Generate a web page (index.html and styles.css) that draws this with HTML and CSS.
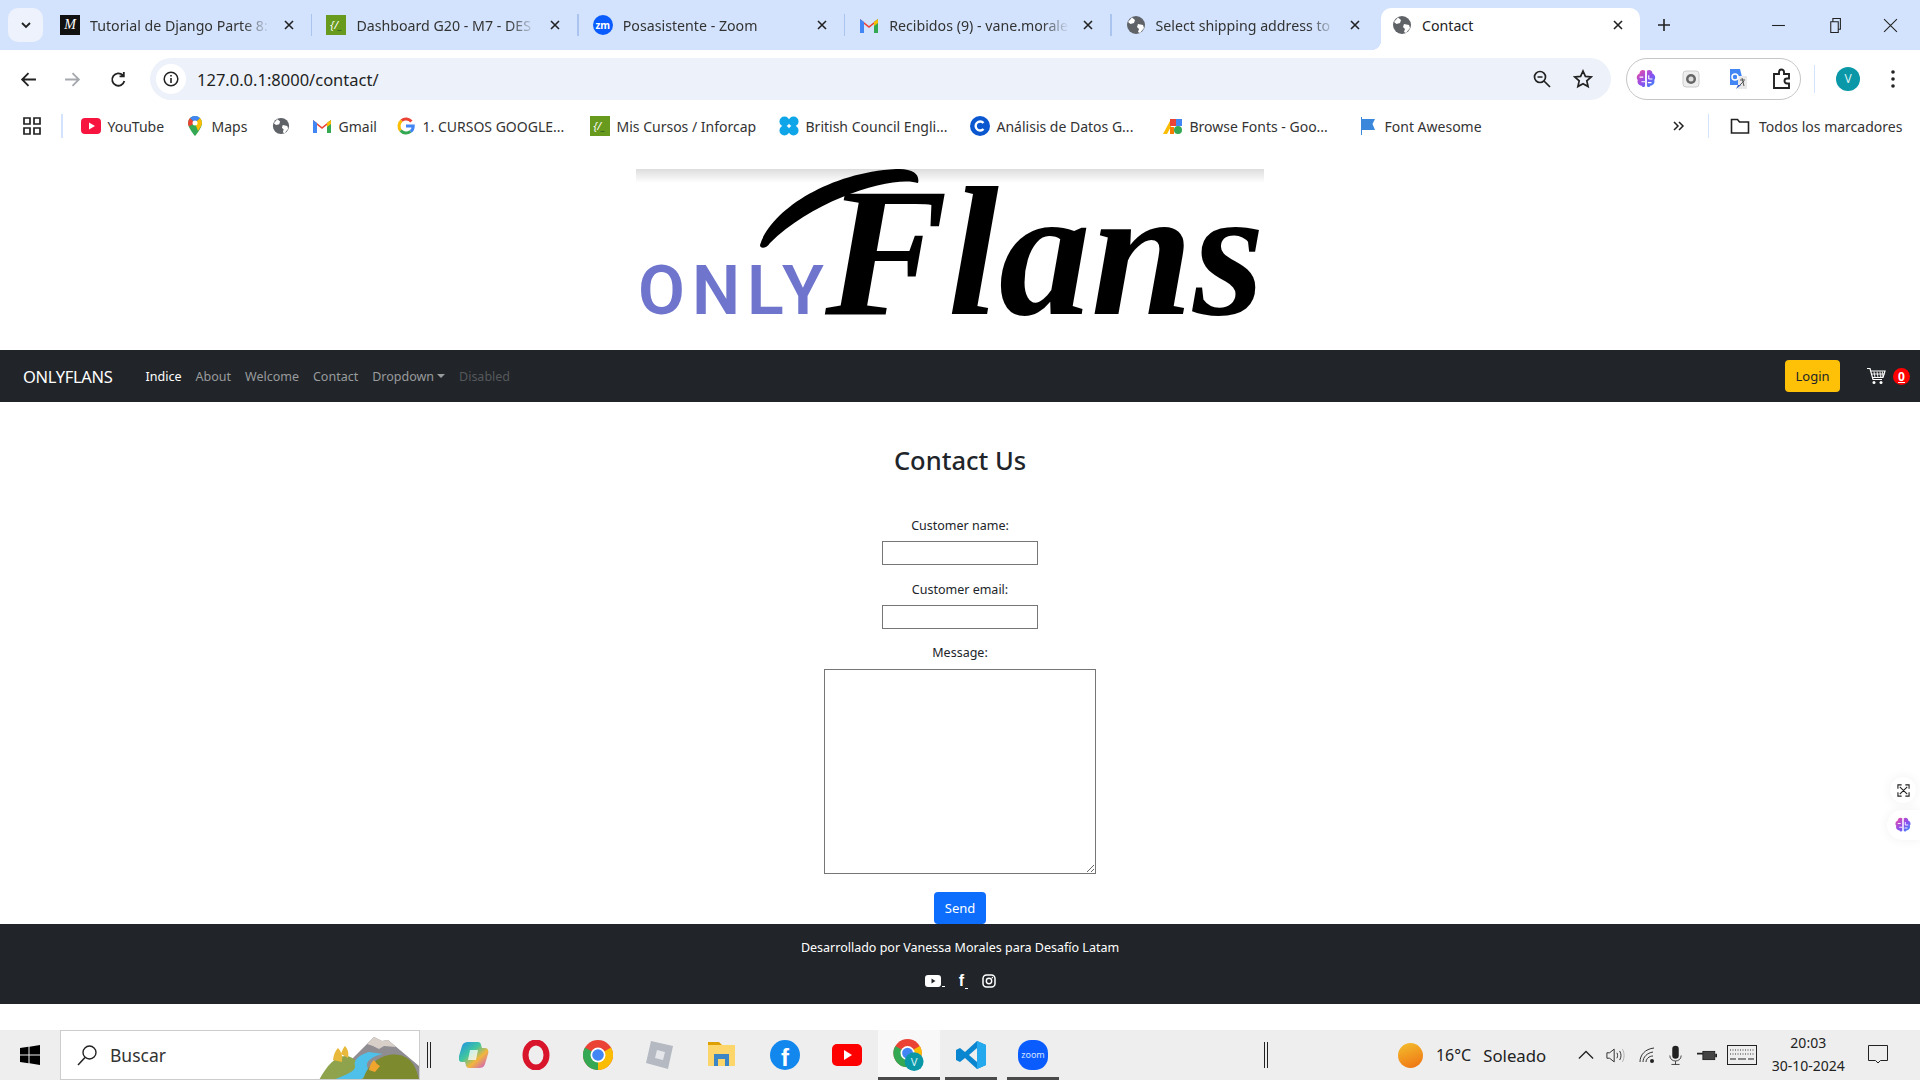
FILE: index.html
```html
<!DOCTYPE html>
<html>
<head>
    <meta charset="utf-8" />
    <title>Contact</title>
    <link rel="stylesheet" href="styles.css">
</head>
<body>
<svg class="defs" width="0" height="0">
    <symbol id="globe" viewBox="0 0 20 20">
        <circle cx="10" cy="10" r="9" fill="#5f6368"/>
        <path d="M6 2.500 9 5 8 8 4.500 9 2 7ZM12 9l5 1 1 3-4 5-2-1 1-3-2-2Z" fill="#fff"/>
    </symbol>
    <symbol id="x" viewBox="0 0 12 12">
        <path d="M2 2l8 8M10 2l-8 8" stroke="#222" stroke-width="1.600" fill="none"/>
    </symbol>
    <symbol id="brain" viewBox="0 0 24 24">
        <defs>
            <linearGradient id="brainfill" x1="0" x2="1" y1="0" y2="1">
                <stop offset="0" stop-color="#f24aa0"/>
                <stop offset=".55" stop-color="#8a4ff0"/>
                <stop offset="1" stop-color="#2f8cf5"/>
            </linearGradient>
        </defs>
        <path d="M11 3C8 1 5 3 5 6 2 7 1 11 3 13c-1 3 1 6 4 6 1 2 3 2 4 1ZM13 3c3-2 6 0 6 3 3 1 4 5 2 7 1 3-1 6-4 6-1 2-3 2-4 1Z" fill="url(#brainfill)"/>
        <path d="M5 10h4M7 15h4M15 8v4M15 12h4M14 16h4" stroke="#fff" stroke-width="1.200" fill="none"/>
    </symbol>
</svg>

<div class="screen">
    <div class="tabstrip">
        <div class="tab-list"><svg viewBox="0 0 12 12" width="12" height="12"><path d="M2 4l4 4 4-4" stroke="#222" stroke-width="1.800" fill="none"/></svg></div>
        <div class="tab">
            <span class="fav fav-black">M</span>
            <span class="tab-title">Tutorial de Django Parte 8:</span>
            <svg class="tab-x"><use href="#x"/></svg>
        </div>
        <div class="tab">
            <span class="fav fav-green">{/<b>_</b></span>
            <span class="tab-title">Dashboard G20 - M7 - DES</span>
            <svg class="tab-x"><use href="#x"/></svg>
        </div>
        <div class="tab">
            <span class="fav fav-zoom">zm</span>
            <span class="tab-title">Posasistente - Zoom</span>
            <svg class="tab-x"><use href="#x"/></svg>
        </div>
        <div class="tab">
            <svg class="fav" viewBox="0 0 20 20"><path d="M1 18V4l9 7 9-7v14h-4V9l-5 4-5-4v9Z" fill="#ea4335"/><path d="M1 18V4l4 3v11Z" fill="#4285f4"/><path d="M19 18V4l-4 3v11Z" fill="#34a853"/><path d="M15 7l4-3v4l-4 3Z" fill="#fbbc04"/></svg>
            <span class="tab-title">Recibidos (9) - vane.morale</span>
            <svg class="tab-x"><use href="#x"/></svg>
        </div>
        <div class="tab">
            <svg class="fav"><use href="#globe"/></svg>
            <span class="tab-title">Select shipping address to</span>
            <svg class="tab-x"><use href="#x"/></svg>
        </div>
        <div class="tab tab-active">
            <svg class="fav"><use href="#globe"/></svg>
            <span class="tab-title">Contact</span>
            <svg class="tab-x"><use href="#x"/></svg>
        </div>
        <svg class="tab-plus" viewBox="0 0 14 14"><path d="M7 1v12M1 7h12" stroke="#222" stroke-width="1.600"/></svg>
        <div class="window-btns">
            <svg viewBox="0 0 14 14"><path d="M1 7h12" stroke="#222"/></svg>
            <svg viewBox="0 0 14 14"><path d="M3.500 3.500h7v10h-7ZM5.500 3.500V.5h7v10h-2" stroke="#222" fill="none"/></svg>
            <svg viewBox="0 0 14 14"><path d="M1 1l12 12M13 1 1 13" stroke="#222"/></svg>
        </div>
    </div>

    <div class="toolbar">
        <svg class="tool-ico back" viewBox="0 0 16 16"><path d="M15 8H2M8 2 2 8l6 6" stroke="#222" stroke-width="1.700" fill="none"/></svg>
        <svg class="tool-ico forward" viewBox="0 0 16 16"><path d="M1 8h13M8 2l6 6-6 6" stroke="#a5a8ad" stroke-width="1.700" fill="none"/></svg>
        <svg class="tool-ico reload" viewBox="0 0 16 16"><path d="M13.500 9.500A5.800 5.800 0 1 1 12 4M13 1v4H9" stroke="#222" stroke-width="1.700" fill="none"/></svg>
        <div class="omnibox">
            <span class="info"><svg viewBox="0 0 16 16" width="16" height="16"><circle cx="8" cy="8" r="6.800" stroke="#222" stroke-width="1.500" fill="none"/><path d="M8 7v5M8 4v1.600" stroke="#222" stroke-width="1.600"/></svg></span>
            <span class="url">127.0.0.1:8000/contact/</span>
            <svg class="omni-ico" viewBox="0 0 18 18"><circle cx="7" cy="7" r="5.500" stroke="#222" stroke-width="1.700" fill="none"/><path d="M11 11l6 6M4.500 7h5" stroke="#222" stroke-width="1.700"/></svg>
            <svg class="omni-ico star" viewBox="0 0 20 20"><path d="M10 2l2.400 5.400 5.800.6-4.400 3.900 1.300 5.700L10 14.700l-5.100 2.900 1.300-5.700L1.800 8l5.800-.6Z" stroke="#222" stroke-width="1.700" fill="none"/></svg>
        </div>
        <div class="ext-pill">
            <svg class="ext"><use href="#brain"/></svg>
            <svg class="ext" viewBox="0 0 22 22"><rect x="3" y="3" width="16" height="16" rx="3" fill="#eee" stroke="#ccc"/><circle cx="11" cy="11" r="5" fill="#666"/><circle cx="11" cy="11" r="2.500" fill="#ddd"/></svg>
            <svg class="ext" viewBox="0 0 22 22"><path d="M4 1h10l4 16H4Z" fill="#4285f4"/><path d="M12 8h9v13H12Z" fill="#e8e8e8"/><path d="M14 12h5M16 10l2 8M18 13l-4 4" stroke="#555" fill="none"/><path d="M12 17l-2 4 5-4Z" fill="#2a56c6"/><circle cx="9" cy="9" r="3" stroke="#fff" stroke-width="1.500" fill="none"/></svg>
            <svg class="ext" viewBox="0 0 22 22"><path d="M3 6h5V4a2.500 2.500 0 0 1 5 0v2h5v4.500h-2a2.500 2.500 0 0 0 0 5h2V20H3Z" stroke="#222" stroke-width="1.900" fill="none"/></svg>
        </div>
        <span class="tool-sep"></span>
        <span class="avatar">V</span>
        <svg class="kebab" viewBox="0 0 4 18"><circle cx="2" cy="2" r="1.800" fill="#222"/><circle cx="2" cy="9" r="1.800" fill="#222"/><circle cx="2" cy="16" r="1.800" fill="#222"/></svg>
    </div>

    <div class="bookmarks">
        <svg class="apps" viewBox="0 0 18 18"><path d="M1 1h6v6H1ZM11 1h6v6h-6ZM1 11h6v6H1ZM11 11h6v6h-6Z" stroke="#222" stroke-width="1.700" fill="none"/></svg>
        <span class="bm-sep"></span>
        <a class="bm bm-yt"><svg viewBox="0 0 20 20"><rect y="2" width="20" height="16" rx="4" fill="#f7143f"/><path d="M8 6.500v7l6-3.500Z" fill="#fff"/></svg>YouTube</a>
        <a class="bm bm-maps"><svg viewBox="0 0 20 20"><path d="M10 0a7 7 0 0 0-7 7c0 5 7 13 7 13s7-8 7-13a7 7 0 0 0-7-7Z" fill="#34a853"/><path d="M10 0a7 7 0 0 0-5 2l5 5 5-5a7 7 0 0 0-5-2Z" fill="#4285f4"/><path d="M5 2a7 7 0 0 0-2 5c0 1 .5 2.500 1 3.500L10 7Z" fill="#ea4335"/><path d="M15 2l-5 5 3 8c2-3 4-6 4-8a7 7 0 0 0-2-5Z" fill="#fbbc04"/><circle cx="10" cy="7" r="2.500" fill="#fff"/></svg>Maps</a>
        <svg class="bm-globe"><use href="#globe"/></svg>
        <a class="bm bm-gmail"><svg viewBox="0 0 20 20"><path d="M1 17V4l9 7 9-7v13h-4V9l-5 4-5-4v8Z" fill="#ea4335"/><path d="M1 17V4l4 3v10Z" fill="#4285f4"/><path d="M19 17V4l-4 3v10Z" fill="#34a853"/><path d="M15 7l4-3v4l-4 3Z" fill="#fbbc04"/></svg>Gmail</a>
        <a class="bm bm-goog"><svg viewBox="0 0 20 20" fill="none" stroke-width="3.400"><path d="M16 5a8 8 0 0 0-11-1" stroke="#ea4335"/><path d="M5 4a8 8 0 0 0-1 11" stroke="#fbbc04"/><path d="M4 15a8 8 0 0 0 11 1" stroke="#34a853"/><path d="M15 16c2-1 3-3 3-6h-8" stroke="#4285f4"/></svg>1. CURSOS GOOGLE...</a>
        <a class="bm bm-cursos"><span class="fav fav-green">{/<b>_</b></span>Mis Cursos / Inforcap</a>
        <a class="bm bm-bc"><svg viewBox="0 0 22 22"><circle cx="6" cy="6" r="5.500" fill="#0ea5e9"/><circle cx="16" cy="6" r="5.500" fill="#0ea5e9"/><circle cx="6" cy="16" r="5.500" fill="#0ea5e9"/><circle cx="16" cy="16" r="5.500" fill="#0ea5e9"/></svg>British Council Engli...</a>
        <a class="bm bm-c"><svg viewBox="0 0 20 20"><circle cx="10" cy="10" r="10" fill="#0b57d0"/><path d="M13.500 7a4.500 4.500 0 1 0 0 6" stroke="#fff" stroke-width="2.400" fill="none"/></svg>Análisis de Datos G...</a>
        <a class="bm bm-fonts"><svg viewBox="0 0 20 20"><path d="M0 18 8 3h4L4 18Z" fill="#fbbc04"/><path d="M7 3h6v7H7Z" fill="#ea4335"/><path d="M13 3h6v7h-6Z" fill="#4285f4"/><circle cx="15" cy="14" r="4" fill="#34a853"/><path d="M7 11h4v7H7Z" fill="#f57c00"/></svg>Browse Fonts - Goo...</a>
        <a class="bm bm-fa"><svg viewBox="0 0 18 20"><path d="M2 1h1v18H2ZM3 3h13l-2.500 5 2.500 6H3Z" fill="#3b87dc"/></svg>Font Awesome</a>
        <svg class="bm-more" viewBox="0 0 12 12"><path d="M1 2l4 4-4 4M6 2l4 4-4 4" stroke="#222" stroke-width="1.500" fill="none"/></svg>
        <span class="bm-sep bm-sep-r"></span>
        <a class="bm bm-all"><svg viewBox="0 0 20 20"><path d="M1.500 3.500h6l2 2.500h9v11h-17Z" stroke="#222" stroke-width="1.600" fill="none"/></svg>Todos los marcadores</a>
    </div>

    <div class="page">
        <div class="logo">
            <span class="logo-only">ONLY</span>
            <span class="logo-flans">Flans</span>
            <svg class="logo-swash" viewBox="0 0 200 90"><path d="M4 78C14 45 70 6 140 2c18-1 24 6 22 14C140 8 60 30 14 76c-4 6-10 6-10 2Z" fill="#000"/></svg>
        </div>

        <nav class="navbar">
            <a class="brand">ONLYFLANS</a>
            <ul class="nav-links">
                <li class="active">Indice</li>
                <li>About</li>
                <li>Welcome</li>
                <li>Contact</li>
                <li class="dropdown">Dropdown</li>
                <li class="disabled">Disabled</li>
            </ul>
            <button class="btn btn-login">Login</button>
            <svg class="cart" viewBox="0 0 20 18"><path d="M1 1.500h3l3 11h9M5 4h14l-2 6.500H7" stroke="#fff" stroke-width="1.200" fill="none"/><path d="M8 4.500l1 6M11 4.500l1 6M14 4.500l.5 6M16.500 4.500l-.5 6M5.500 7h13" stroke="#fff" stroke-width=".9"/><circle cx="8" cy="15.500" r="1.500" fill="#fff"/><circle cx="15" cy="15.500" r="1.500" fill="#fff"/></svg>
            <span class="cart-badge">0</span>
        </nav>

        <main class="contact">
            <h1>Contact Us</h1>
            <form class="contact-form">
                <label>Customer name:</label>
                <input type="text" class="field field-name">
                <label>Customer email:</label>
                <input type="email" class="field">
                <label>Message:</label>
                <textarea class="field-msg"></textarea>
                <button type="button" class="btn btn-send">Send</button>
            </form>
        </main>

        <footer class="footer">
            <p>Desarrollado por Vanessa Morales para Desafío Latam</p>
            <div class="socials">
                <a><svg viewBox="0 0 16 12" width="16" height="12"><rect width="16" height="12" rx="3" fill="#fff"/><path d="M6.500 3.500v5l4-2.500Z" fill="#212529"/></svg><i></i></a>
                <a><span class="fb">f</span><i></i></a>
                <a><svg viewBox="0 0 14 14" width="14" height="14"><rect x="1" y="1" width="12" height="12" rx="3.500" stroke="#fff" stroke-width="1.500" fill="none"/><circle cx="7" cy="7" r="2.700" stroke="#fff" stroke-width="1.400" fill="none"/><circle cx="10.400" cy="3.600" r=".8" fill="#fff"/></svg></a>
            </div>
        </footer>
    </div>

    <div class="taskbar">
        <svg class="win" viewBox="0 0 20 20"><path d="M0 3l8.500-1.200V9.500H0ZM9.500 1.700 20 0v9.500H9.500ZM0 10.500h8.500v7.700L0 17ZM9.500 10.500H20V20L9.500 18.300Z" fill="#000"/></svg>
        <div class="search">
            <svg viewBox="0 0 22 22" width="22" height="22"><circle cx="13.500" cy="8.500" r="6.500" stroke="#222" stroke-width="1.400" fill="none"/><path d="M9 13.500 2 21" stroke="#222" stroke-width="1.500"/></svg>
            <span>Buscar</span>
            <svg class="scene" viewBox="0 0 100 50">
                <path d="M32 30 55 7l8 4 6-1 31 26v14H30Z" fill="#8f8c92"/>
                <path d="M48 14 55 7l8 4 6-1 8 7-12-1-5 3-6-3Z" fill="#d8cfc9"/>
                <path d="M0 50C8 36 16 25 28 26 40 28 42 42 48 50Z" fill="#8ea34b"/>
                <path d="M14 30c1-8 4-11 5-12 3 3 5 8 4 14ZM22 24c1-4 3-7 4-8 3 3 4 7 3 12Z" fill="#e8b93a"/>
                <path d="M50 22c-10 3-16 8-14 14 1 5-10 9-22 14h26c10-4 10-9 8-14-1-5 6-10 16-12Z" fill="#4fc0ea"/>
                <path d="M44 50c4-18 24-30 40-24 10 4 14 14 16 24Z" fill="#7d8a2d"/>
                <path d="M50 40c1-6 3-8 5-10l3 4 3 2-5 6Z" fill="#efa52e"/>
            </svg>
        </div>
        <span class="tb-sep"></span>
        <div class="tb-apps">
            <span class="tb-app"><svg viewBox="0 0 30 30"><defs><linearGradient id="cop" x1="0" x2="1" y1="0" y2="1"><stop offset="0" stop-color="#1f8fe8"/><stop offset=".4" stop-color="#3fc6a0"/><stop offset=".65" stop-color="#f2b63c"/><stop offset="1" stop-color="#c84fdc"/></linearGradient></defs><path d="M9 2h10c3 0 3 3 4 6h3c3 0 4 3 3 6l-3 10c-1 3-3 4-6 4H10c-3 0-3-3-4-6H3c-3 0-4-3-3-6L3 6c1-3 3-4 6-4Z" fill="url(#cop)"/><path d="M11 10h8l-2 10H9Z" fill="#fff" opacity=".75"/></svg></span>
            <span class="tb-app"><svg viewBox="0 0 30 30"><ellipse cx="15" cy="15" rx="10.500" ry="12.500" stroke="#d9152b" stroke-width="6" fill="none"/></svg></span>
            <span class="tb-app"><svg viewBox="0 0 30 30"><circle cx="15" cy="15" r="15" fill="#ea4335"/><path d="M15 15 28 7.500A15 15 0 0 1 15 30Z" fill="#fbbc04"/><path d="M15 15 15 30A15 15 0 0 1 2 7.500Z" fill="#34a853"/><circle cx="15" cy="15" r="7.500" fill="#fff"/><circle cx="15" cy="15" r="5.800" fill="#4285f4"/></svg></span>
            <span class="tb-app"><svg viewBox="0 0 30 30"><path d="M6 1 28 6l-5 23-22-6Z" fill="#b4b9c2"/><path d="M12 10l8 2-2 8-8-2Z" fill="#e4e6ea"/></svg></span>
            <span class="tb-app"><svg viewBox="0 0 30 30"><path d="M1 2h11l3 3H1Z" fill="#dea000"/><path d="M1 5h27v21H1Z" fill="#fcd66b"/><path d="M7 14h15v12h-4v-7h-7v7H7Z" fill="#3d86c6"/></svg></span>
            <span class="tb-app"><svg viewBox="0 0 30 30"><circle cx="15" cy="15" r="15" fill="#1287ee"/><text x="15" y="26" class="fb-glyph">f</text></svg></span>
            <span class="tb-app"><svg viewBox="0 0 30 30"><rect y="4" width="30" height="22" rx="5" fill="#f00"/><path d="M12 10v10l8-5Z" fill="#fff"/></svg></span>
            <span class="tb-app tb-open"><svg viewBox="0 0 32 34"><circle cx="15" cy="15" r="15" fill="#ea4335"/><path d="M15 15 28 7.500A15 15 0 0 1 15 30Z" fill="#fbbc04"/><path d="M15 15 15 30A15 15 0 0 1 2 7.500Z" fill="#34a853"/><circle cx="15" cy="15" r="7.500" fill="#fff"/><circle cx="15" cy="15" r="5.800" fill="#4285f4"/><circle cx="22" cy="24" r="10" fill="#0a97a8"/><text x="22" y="28.500" class="v-glyph">V</text></svg></span>
            <span class="tb-app tb-run"><svg viewBox="0 0 30 30"><path d="M21 1 30 5v20l-9 4-12-11-5 4-4-2V10l4-2 5 4Z" fill="#0a85cf"/><path d="M21 1l9 4v20l-9 4Z" fill="#25a9ee"/><path d="M21 8v14l-8-7Z" fill="#eee"/></svg></span>
            <span class="tb-app tb-run"><svg viewBox="0 0 30 30"><rect width="30" height="30" rx="13" fill="#0b5cff"/><text x="15" y="18" class="zoom-glyph">zoom</text></svg></span>
        </div>
        <span class="tb-sep tb-sep-r"></span>
        <span class="sun"></span>
        <span class="weather">16°C</span>
        <span class="weather weather-txt">Soleado</span>
        <svg class="tray tray-up" viewBox="0 0 18 10"><path d="M1 9l8-8 8 8" stroke="#222" stroke-width="1.400" fill="none"/></svg>
        <svg class="tray tray-vol" viewBox="0 0 22 18"><path d="M1 6h3l5-4v14l-5-4H1Z" stroke="#222" fill="none"/><path d="M12 6c1 2 1 4 0 6M15 4c2 3 2 7 0 10" stroke="#222" fill="none"/><path d="M18 2c2.500 4 2.500 10 0 14" stroke="#aaa" fill="none"/></svg>
        <svg class="tray tray-wifi" viewBox="0 0 18 18"><path d="M1 16C1 9 6 3 15 2M4 16c0-5 4-9 10-10M7 16c0-3 3-6 7-6" stroke="#333" fill="none"/><circle cx="13" cy="15" r="2" fill="#222"/></svg>
        <svg class="tray tray-mic" viewBox="0 0 16 24"><rect x="4" y="0" width="8" height="16" rx="4" fill="#222"/><path d="M1 12c0 9 14 9 14 0M8 19v4M3 23h10" stroke="#222" fill="none"/></svg>
        <svg class="tray tray-bat" viewBox="0 0 22 14"><path d="M2 0v5M5 0v5M0 4h7v2H0Z" fill="#222"/><rect x="6.500" y="2.500" width="13" height="9" fill="#444" stroke="#222"/><path d="M21 5v4" stroke="#222" stroke-width="2"/></svg>
        <svg class="tray tray-kb" viewBox="0 0 30 20"><rect x=".5" y=".5" width="29" height="19" fill="none" stroke="#222"/><path d="M3 5h24M3 9h24" stroke="#333" stroke-dasharray="1 1.500"/><path d="M3 14h6M11 14h8M21 14h6" stroke="#222"/></svg>
        <div class="clock"><span>20:03</span><span>30-10-2024</span></div>
        <svg class="tray tray-note" viewBox="0 0 20 20"><path d="M.5.500h19v15h-7L10 18l-2.500-2.500h-7Z" stroke="#222" fill="none"/></svg>
    </div>

    <div class="side-tools">
        <span class="side-btn"><svg viewBox="0 0 14 14" width="13" height="13"><path d="M1 5V1h4M9 1h4v4M13 9v4H9M5 13H1V9M3 3l8 8M11 3 3 11" stroke="#222" stroke-width="1.200" fill="none"/></svg></span>
        <span class="side-pill"><svg width="18" height="18"><use href="#brain"/></svg></span>
    </div>
</div>
</body>
</html>
```

FILE: styles.css
```css
* {
    box-sizing: border-box;
}

body {
    margin: 0;
    background-color: white;
    color: #212529;
    font-family: "Noto Sans", sans-serif;
}

.defs {
    position: absolute;
}

.screen {
    position: relative;
    width: 1920px;
    height: 1080px;
    display: flex;
    flex-direction: column;
    overflow: hidden;
}

/* browser tabs */
.tabstrip {
    height: 50px;
    flex: none;
    display: flex;
    align-items: flex-end;
    background-color: #d3e3fd;
}
.tab-list {
    width: 35px;
    height: 34px;
    margin: 0 6px 8px 8px;
    display: flex;
    align-items: center;
    justify-content: center;
    background-color: #edf2fc;
    border-radius: 10px;
}
.tab {
    position: relative;
    width: 266.4px;
    height: 42px;
    padding: 0 18px 8px 11px;
    display: flex;
    align-items: center;
    flex: none;
}
.tab::after {
    content: "";
    position: absolute;
    right: 3px;
    top: 6px;
    width: 1.5px;
    height: 22px;
    background-color: #a9c4ee;
}
.tab:nth-child(6)::after,
.tab-active::after {
    display: none;
}
.fav {
    width: 20px;
    height: 20px;
    flex: none;
}
.fav-black {
    background-color: #111;
    color: white;
    font: italic 14px/20px "Liberation Serif", serif;
    text-align: center;
}
.fav-green {
    background-color: #689a1e;
    color: white;
    font: italic 11px/20px "Noto Sans", sans-serif;
    text-align: center;
    overflow: hidden;
}
.fav-green b {
    color: #174a22;
}
.fav-zoom {
    background-color: #0b5cff;
    color: white;
    border-radius: 50%;
    font: bold 10px/20px "Noto Sans", sans-serif;
    text-align: center;
}
.tab-title {
    flex: none;
    width: 180px;
    margin-left: 10px;
    font-size: 14.2px;
    color: #333;
    white-space: nowrap;
    -webkit-mask-image: linear-gradient(to right, black 85%, transparent);
    mask-image: linear-gradient(to right, black 85%, transparent);
}
.tab-x {
    width: 12px;
    height: 12px;
    margin-left: 13px;
    flex: none;
}
.tab-active {
    width: 259px;
    margin-right: 17px;
    background-color: white;
    border-radius: 10px 10px 0 0;
}
.tab-active .tab-title {
    width: 187px;
    -webkit-mask-image: none;
    mask-image: none;
    color: #222;
}
.tab-active .tab-x {
    margin-left: 3px;
}
.tab-active::before {
    content: "";
    position: absolute;
    left: -10px;
    bottom: 0;
    width: 10px;
    height: 10px;
    background: radial-gradient(circle at 0 0, transparent 10px, white 10.5px);
}
.tab-plus {
    width: 14px;
    height: 14px;
    margin: 0 0 18px 0;
    flex: none;
}
.window-btns {
    margin-left: auto;
    display: flex;
    gap: 41px;
    padding: 0 22px 17px 0;
}
.window-btns svg {
    width: 15px;
    height: 15px;
}

/* address bar */
.toolbar {
    height: 57px;
    flex: none;
    display: flex;
    align-items: center;
    padding-top: 1px;
    background-color: white;
    border-radius: 10px 10px 0 0;
}
.tool-ico {
    width: 17px;
    height: 17px;
    flex: none;
}
.back {
    margin-left: 20px;
}
.forward {
    margin-left: 27px;
}
.reload {
    margin-left: 29px;
}
.omnibox {
    width: 1461px;
    height: 42px;
    margin-left: 23px;
    padding-left: 6px;
    display: flex;
    align-items: center;
    background-color: #edf2fa;
    border-radius: 21px;
}
.info {
    width: 30px;
    height: 30px;
    background-color: white;
    border-radius: 50%;
    display: flex;
    align-items: center;
    justify-content: center;
}
.url {
    margin-left: 11px;
    font-size: 16.5px;
    color: #1f1f1f;
    padding-top: 1px;
}
.omni-ico {
    width: 18px;
    height: 18px;
    margin-left: auto;
}
.omni-ico.star {
    width: 20px;
    height: 20px;
    margin: 0 18px 0 22px;
}
.ext-pill {
    width: 175px;
    height: 42px;
    margin-left: 15px;
    padding: 0 7px 0 8px;
    display: flex;
    align-items: center;
    justify-content: space-between;
    border: 1px solid #c4c7c5;
    border-radius: 21px;
}
.ext {
    width: 22px;
    height: 22px;
}
.tool-sep {
    width: 1px;
    height: 28px;
    margin-left: 13px;
    background-color: #d3e3fd;
}
.avatar {
    width: 24px;
    height: 24px;
    margin-left: 21px;
    background-color: #0a97a8;
    color: #d8f2f4;
    border-radius: 50%;
    font-size: 12px;
    line-height: 24px;
    text-align: center;
}
.kebab {
    width: 4px;
    height: 18px;
    margin-left: 31px;
}

/* bookmarks */
.bookmarks {
    height: 40px;
    flex: none;
    display: flex;
    align-items: center;
    background-color: white;
    font-size: 14px;
    color: #333;
    padding-bottom: 2px;
}
.apps {
    width: 18px;
    height: 18px;
    margin-left: 23px;
}
.bm-sep {
    width: 1.5px;
    height: 24px;
    margin-left: 20px;
    background-color: #d3e3fd;
}
.bm {
    display: flex;
    align-items: center;
    flex: none;
    white-space: nowrap;
}
.bm svg,
.bm .fav {
    width: 20px;
    height: 20px;
    margin-right: 7px;
    flex: none;
}
.bm-yt { margin-left: 18px; width: 85px; }
.bm-maps { margin-left: 19px; width: 65px; }
.bm-globe { width: 18px; height: 18px; margin-left: 22px; }
.bm-gmail { margin-left: 22px; width: 64px; }
.bm-goog { margin-left: 21px; width: 172px; }
.bm-goog svg { width: 18px; height: 18px; margin-right: 8px; }
.bm-cursos { margin-left: 21px; width: 168px; }
.bm-bc { margin-left: 21px; width: 169px; }
.bm-c { margin-left: 22px; width: 167px; }
.bm-fonts { margin-left: 26px; width: 169px; }
.bm-fa { margin-left: 26px; width: 123px; }
.bm-more { width: 12px; height: 12px; margin-left: 192px; }
.bm-sep-r { margin-left: 23px; }
.bm-all { margin-left: 21px; }
.bm-all svg { margin-right: 9px; }

/* page */
.page {
    flex: none;
    height: 883px;
    background-color: white;
    display: flex;
    flex-direction: column;
}
.logo {
    position: relative;
    width: 628px;
    height: 167px;
    margin: 22px 0 14px 636px;
    padding-left: 2px;
    display: flex;
    align-items: baseline;
    background: linear-gradient(#ddd, white 14px);
}
.logo-only {
    font: 600 68px/167px Roboto, sans-serif;
    letter-spacing: 7px;
    color: #6f75cc;
}
.logo-flans {
    margin-left: -6px;
    font: italic bold 184px/167px "Liberation Serif", serif;
    color: black;
    white-space: nowrap;
}
.logo-swash {
    position: absolute;
    left: 120px;
    top: -2px;
    width: 200px;
    height: 90px;
}

.navbar {
    height: 52px;
    flex: none;
    padding: 0 10px 0 23px;
    display: flex;
    align-items: center;
    background-color: #212529;
}
.brand {
    font-size: 16.5px;
    letter-spacing: -.3px;
    color: white;
}
.nav-links {
    list-style: none;
    margin: 0 0 0 26px;
    padding: 0;
    display: flex;
    font-size: 12.5px;
    color: #999b9d;
}
.nav-links li {
    padding: 0 7px;
}
.nav-links .active {
    color: white;
}
.nav-links .disabled {
    color: #55585b;
}
.dropdown::after {
    content: "";
    display: inline-block;
    margin-left: 3px;
    vertical-align: 3px;
    border-top: 4px solid;
    border-left: 4px solid transparent;
    border-right: 4px solid transparent;
}
.btn {
    border: 0;
    border-radius: 4px;
    height: 32px;
    font-family: "Noto Sans", sans-serif;
    font-size: 13px;
    padding: 0;
}
.btn-login {
    width: 55px;
    margin-left: auto;
    background-color: #ffc107;
    color: #212529;
}
.cart {
    width: 20px;
    height: 18px;
    margin-left: 26px;
}
.cart-badge {
    width: 17px;
    height: 17px;
    margin-left: 7px;
    background-color: #f00;
    color: white;
    border-radius: 50%;
    font-size: 12px;
    font-weight: bold;
    line-height: 17px;
    text-align: center;
    text-decoration: underline;
}

.contact {
    flex: none;
    padding-top: 41px;
    text-align: center;
}
.contact h1 {
    margin: 0;
    font-size: 25.5px;
    font-weight: 500;
    line-height: 34px;
    color: #212529;
}
.contact-form {
    margin-top: 38px;
    display: flex;
    flex-direction: column;
    align-items: center;
}
.contact-form label {
    font-size: 12.5px;
    line-height: 20px;
    padding-top: 1px;
    margin-bottom: 5px;
}
.field {
    width: 156px;
    height: 24px;
    margin-bottom: 13px;
    border: 1px solid #767676;
    border-radius: 0;
}
.field-name {
    margin-bottom: 13.5px;
}
.field-msg {
    display: block;
    width: 272px;
    height: 205px;
    margin: 1px 0 18px;
    border: 1px solid #767676;
    border-radius: 0;
}
.btn-send {
    width: 52px;
    background-color: #0d6efd;
    color: white;
}

.footer {
    height: 80px;
    flex: none;
    padding-top: 14px;
    background-color: #212529;
    color: white;
    text-align: center;
    font-size: 12.5px;
    line-height: 20px;
}
.footer p {
    margin: 0;
}
.socials {
    margin-top: 15px;
    padding-left: 1px;
    display: flex;
    justify-content: center;
    align-items: center;
    gap: 14px;
    height: 16px;
}
.socials a {
    display: flex;
    align-items: flex-end;
}
.socials i {
    width: 3px;
    height: 1px;
    margin-left: 1px;
    background-color: white;
}
.fb {
    font: bold 16px/16px "Liberation Sans", sans-serif;
}

/* windows taskbar */
.taskbar {
    height: 50px;
    margin-top: auto;
    flex: none;
    display: flex;
    align-items: center;
    background-color: #eeeeee;
}
.win {
    width: 20px;
    height: 20px;
    margin: 0 20px;
    flex: none;
}
.search {
    width: 360px;
    height: 50px;
    padding-left: 15px;
    display: flex;
    align-items: center;
    gap: 12px;
    background-color: white;
    border: 1px solid #ccc;
    font-size: 17.5px;
    color: #333;
    overflow: hidden;
}
.scene {
    width: 100px;
    height: 50px;
    margin-left: auto;
}
.tb-sep {
    width: 4px;
    height: 26px;
    margin-left: 7px;
    border-left: 1px solid #222;
    border-right: 1px solid #222;
}
.tb-apps {
    margin-left: 12px;
    display: flex;
}
.tb-app {
    position: relative;
    width: 62.1px;
    height: 50px;
    display: flex;
    align-items: center;
    justify-content: center;
}
.tb-app svg {
    width: 30px;
    height: 30px;
}
.tb-open {
    background-color: #f8f8f8;
    border-bottom: 3px solid #4a4a4a;
}
.tb-open svg {
    height: 32px;
    width: 31px;
    margin-top: 3px;
}
.tb-run::after {
    content: "";
    position: absolute;
    left: 5px;
    right: 5px;
    bottom: 0;
    height: 3px;
    background-color: #4a4a4a;
}
.fb-glyph {
    font: bold 24px "Liberation Sans", sans-serif;
    fill: white;
    text-anchor: middle;
}
.v-glyph {
    font: 12px "Noto Sans", sans-serif;
    fill: #cdeff2;
    text-anchor: middle;
}
.zoom-glyph {
    font: 9px "Noto Sans", sans-serif;
    fill: #d5e3ff;
    text-anchor: middle;
}
.tb-sep-r {
    margin-left: 200px;
}
.sun {
    width: 25px;
    height: 25px;
    margin-left: 130px;
    border-radius: 50%;
    background: linear-gradient(160deg, #f3c02e, #ef6f12);
}
.weather {
    margin-left: 13px;
    font-size: 16px;
    color: #222;
}
.weather-txt {
    margin-left: 12px;
    font-size: 16.8px;
}
.tray {
    flex: none;
}
.tray-up { width: 16px; height: 10px; margin-left: 32px; }
.tray-vol { width: 20px; height: 17px; margin-left: 12px; }
.tray-wifi { width: 18px; height: 18px; margin-left: 13px; }
.tray-mic { width: 13px; height: 23px; margin-left: 12px; }
.tray-bat { width: 20px; height: 13px; margin-left: 15px; }
.tray-kb { width: 30px; height: 20px; margin-left: 10px; }
.clock {
    width: 80px;
    margin-left: 11px;
    margin-top: -2px;
    display: flex;
    flex-direction: column;
    align-items: center;
    gap: 3px;
    font-size: 14px;
    line-height: 20px;
    color: #222;
}
.tray-note { width: 20px; height: 20px; margin-left: 20px; }

/* little floating extension buttons */
.side-tools {
    position: absolute;
    right: 0;
    top: 777px;
    display: flex;
    flex-direction: column;
    align-items: flex-end;
    gap: 7px;
}
.side-btn,
.side-pill {
    display: flex;
    align-items: center;
    background-color: white;
    box-shadow: 0 0 12px rgba(0, 0, 0, .06);
}
.side-btn {
    width: 26px;
    height: 26px;
    margin-right: 4px;
    justify-content: center;
    border-radius: 50%;
}
.side-pill {
    width: 33px;
    height: 30px;
    padding-left: 7px;
    border-radius: 15px 0 0 15px;
}
```
